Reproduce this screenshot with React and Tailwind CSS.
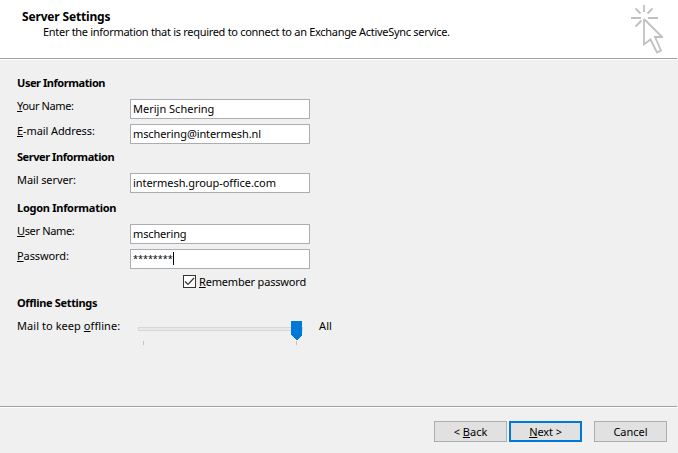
import React from "react";

const base = "font-['Noto_Sans',sans-serif] text-[11px] leading-4 text-black whitespace-nowrap";

function U({ children }) {
  return <span className="underline decoration-1 underline-offset-1">{children}</span>;
}

function Heading({ className = "", children }) {
  return (
    <h2 className={`h-4 w-fit font-bold ${className}`}>
      {children}
    </h2>
  );
}

function Field({ label, value, labelClass = "", valueClass = "", className = "", caret }) {
  return (
    <div className={`flex h-5 items-start ${className}`}>
      <label className="-mt-px w-[113px] shrink-0">
        <span className={labelClass}>{label}</span>
      </label>
      <div className="flex h-5 w-[180px] items-start border border-[#abadb3] bg-white pt-px pl-[2px]">
        <span className={valueClass}>{value}</span>
        {caret && <span className="mt-px h-[13px] w-px bg-black" />}
      </div>
    </div>
  );
}

function Divider() {
  return <div className="mr-px h-[2px] shrink-0 border-t border-[#a0a0a0] bg-white" />;
}

function CursorIcon() {
  return (
    <svg className="h-[50px] w-[33px]" viewBox="0 0 33 50" fill="none" stroke="#c0c0c0" strokeWidth="1.8">
      <path d="M14 0V7M1 13H11M18 13H28M5.5 3.5L10.5 8.5M22.5 3.5L17.5 8.5M5.5 21.5L11.5 15.5" />
      <path d="M14 14V39.5L20.5 34.5L27 47.5L31 45.5L25 32H32.2L14 14" />
    </svg>
  );
}

export default function App() {
  return (
    <div className={`flex h-[453px] w-[678px] flex-col overflow-hidden bg-[#f0f0f0] ${base}`}>
      <header className="flex h-[58px] shrink-0 justify-between bg-white pr-[15px] pl-[22px]">
        <div className="pt-[9px]">
          <h1 className="h-[15px] w-fit text-[12px] font-bold tracking-[-0.17px]">Server Settings</h1>
          <p className="w-fit pl-[21px] tracking-[-0.3px]">
            Enter the information that is required to connect to an Exchange ActiveSync service.
          </p>
        </div>
        <div className="pt-[5px]">
          <CursorIcon />
        </div>
      </header>
      <Divider />
      <main className="flex h-[346px] shrink-0 flex-col pt-[15px] pl-[17px]">
        <Heading className="tracking-[-0.44px]">User Information</Heading>
        <Field className="mt-2" labelClass="tracking-[-0.4px]" label={<><U>Y</U>our Name:</>} value="Merijn Schering" />
        <Field
          className="mt-[5px]"
          labelClass="tracking-[-0.1px]"
          valueClass="tracking-[-0.1px]"
          label={<><U>E</U>-mail Address:</>}
          value="mschering@intermesh.nl"
        />
        <Heading className="mt-[5px] tracking-[-0.44px]">Server Information</Heading>
        <Field
          className="mt-2"
          labelClass="tracking-[-0.1px]"
          valueClass="tracking-[-0.06px]"
          label="Mail server:"
          value="intermesh.group-office.com"
        />
        <Heading className="mt-[7px] tracking-[-0.27px]">Logon Information</Heading>
        <Field
          className="mt-2"
          labelClass="tracking-[-0.35px]"
          valueClass="tracking-[-0.15px]"
          label={<><U>U</U>ser Name:</>}
          value="mschering"
        />
        <Field
          className="mt-[5px]"
          labelClass="tracking-[-0.1px]"
          valueClass="text-[9px]"
          label={<><U>P</U>assword:</>}
          value="********"
          caret
        />
        <div className="mt-[5px] ml-[166px] flex h-4 items-start">
          <span className="mt-px flex size-[13px] items-center justify-center border border-[#333] bg-white">
            <svg className="size-[11px]" viewBox="0 0 11 11" fill="none" stroke="#333" strokeWidth="1.2">
              <path d="M1 5.5L4 8.5L10 2" />
            </svg>
          </span>
          <span className="ml-[3px] tracking-[-0.18px]"><U>R</U>emember password</span>
        </div>
        <Heading className="mt-[5px] tracking-[-0.33px]">Offline Settings</Heading>
        <div className="mt-[7px] flex h-7 items-start">
          <span className="w-[121px] tracking-[0.06px]">Mail to keep <U>o</U>ffline:</span>
          <svg className="mt-[3px] h-6 w-[165px]" viewBox="0 0 165 24" shapeRendering="crispEdges">
            <path d="M0.5 6.5H164V9.5H0.5Z" fill="#e7eaea" stroke="#d6d6d6" />
            <path d="M5.5 20V24M158.5 20V24" stroke="#c4c4c4" />
            <path d="M153 0H164V14L159 19H158L153 14Z" fill="#0078d7" />
          </svg>
          <span className="ml-4 tracking-[0.1px]">All</span>
        </div>
      </main>
      <Divider />
      <footer className="flex h-[45px] pt-[13px] pl-[434px]">
        <button className="h-[21px] w-[73px] border border-[#adadad] bg-[#e1e1e1]">&lt; <U>B</U>ack</button>
        <button className="ml-[2px] h-[21px] w-[73px] border-2 border-[#0078d7] bg-[#e1e1e1] tracking-[-0.1px]"><U>N</U>ext &gt;</button>
        <button className="ml-3 h-[21px] w-[73px] border border-[#adadad] bg-[#e1e1e1]">Cancel</button>
      </footer>
    </div>
  );
}
